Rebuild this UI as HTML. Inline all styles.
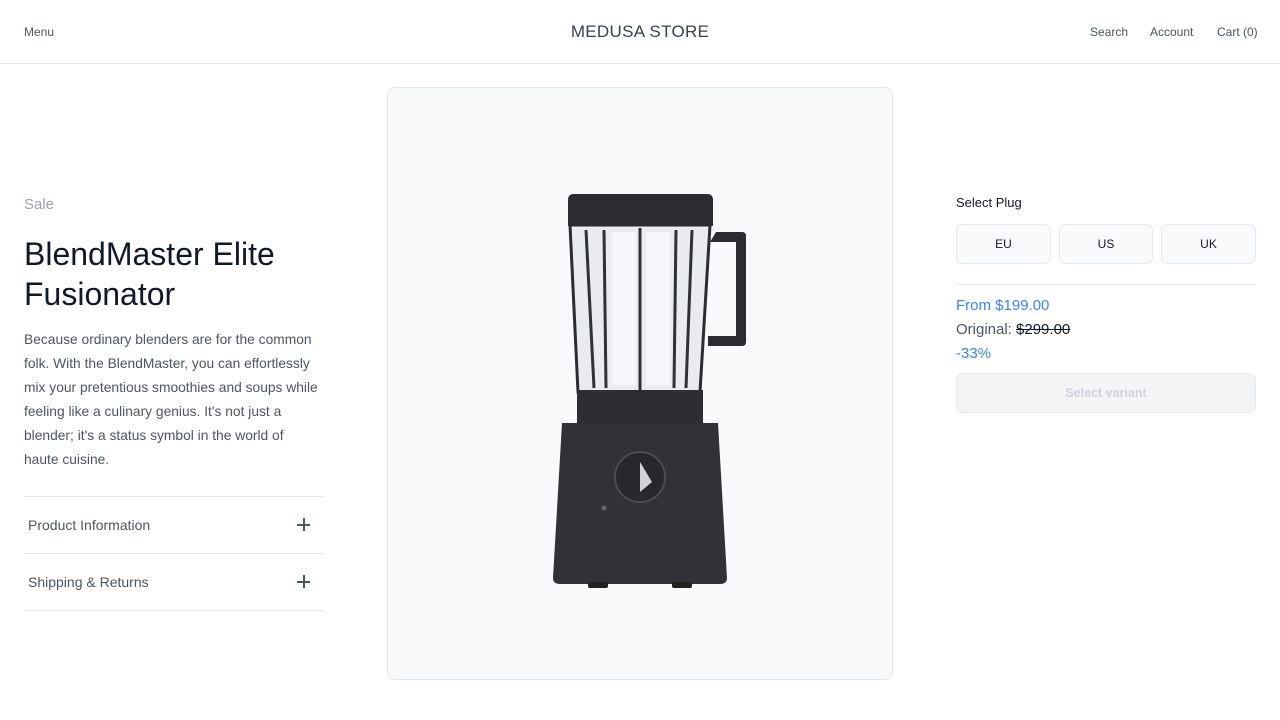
<!DOCTYPE html>
<html><head><meta charset="utf-8"><style>
*{margin:0;padding:0;box-sizing:border-box}
body{width:1280px;height:720px;background:#fff;font-family:"Liberation Sans",sans-serif;color:#374151;position:relative;overflow:hidden}
.hdr{position:absolute;left:0;top:0;width:1280px;height:64px;border-bottom:1px solid #e5e7eb}
.hdr span{position:absolute;top:25px;font-size:12px;color:#4b5563}
.logo{position:absolute;left:0;width:1280px;text-align:center;top:22px;font-size:17px;color:#374151;letter-spacing:.3px}
.abs{position:absolute}
.acc{position:absolute;left:24px;width:300px;height:57px;border-top:1px solid #e5e7eb;font-size:14px;color:#4b5563}
.acc span{position:absolute;left:4px;top:20px}
.acc i{position:absolute;right:14px;top:21px;width:13px;height:13px}
.acc i:before{content:"";position:absolute;left:0;top:6px;width:13px;height:1.5px;background:#4b5563}
.acc i:after{content:"";position:absolute;left:6px;top:0;width:1.5px;height:13px;background:#4b5563}
.btn{position:absolute;top:224px;height:40px;border:1px solid #e5e7eb;border-radius:7px;background:#f9fafb;font-size:12px;text-align:center;line-height:38px;color:#111827}
</style></head><body>
<div class="hdr">
<span style="left:24px">Menu</span>
<div class="logo">MEDUSA STORE</div>
<span style="left:1090px">Search</span>
<span style="left:1150px">Account</span>
<span style="left:1217px">Cart (0)</span>
</div>
<div class="abs" style="left:24px;top:196px;font-size:15px;color:#9ca3af">Sale</div>
<div class="abs" style="left:24px;top:234px;font-size:32px;line-height:40px;color:#111827;width:330px">BlendMaster Elite Fusionator</div>
<div class="abs" style="left:24px;top:328px;width:296px;font-size:13.8px;line-height:24px;color:#4b5563">Because ordinary blenders are for the common folk. With the BlendMaster, you can effortlessly mix your pretentious smoothies and soups while feeling like a culinary genius. It's not just a blender; it's a status symbol in the world of haute cuisine.</div>
<div class="acc" style="top:496px"><span>Product Information</span><i></i></div>
<div class="acc" style="top:553px"><span>Shipping &amp; Returns</span><i></i></div>
<div class="abs" style="left:24px;top:610px;width:300px;border-top:1px solid #e5e7eb"></div>

<div class="abs" style="left:387px;top:87px;width:506px;height:593px;background:#f8f9fb;border:1px solid #e5e7eb;border-radius:8px"></div>
<svg class="abs" style="left:0;top:0" width="1280" height="720">
<path d="M716 232 H742 Q746 232 746 236 V342 Q746 346 742 346 H708 V336 H736 V242 H710 Z" fill="#2a2c30"/>
<path d="M570 225 L710 225 L700 392 L578 392 Z" fill="#e9ecef" stroke="#2a2c30" stroke-width="3"/>
<path d="M586 230 L594 388 M604 230 L606 388 M640 228 L640 390 M676 230 L674 388 M692 230 L686 388" stroke="#2f3135" stroke-width="3"/>
<path d="M612 232 H636 V385 H612Z M646 232 H670 V385 H646Z" fill="#f4f6f8"/>
<path d="M568 200 Q568 194 574 194 H707 Q713 194 713 200 V226 H568Z" fill="#2a2c30"/>
<rect x="577" y="390" width="126" height="33" fill="#2c2e32"/>
<path d="M562 423 H718 L727 578 Q727 584 720 584 H560 Q553 584 553 578 Z" fill="#303236"/>
<rect x="588" y="582" width="20" height="6" rx="2" fill="#222"/>
<rect x="672" y="582" width="20" height="6" rx="2" fill="#222"/>
<circle cx="640" cy="477" r="25" fill="#26282b" stroke="#4a4c50" stroke-width="2"/>
<path d="M640 462 V492 L652 482Z" fill="#d0d2d4"/>
<circle cx="604" cy="508" r="2.5" fill="#666"/>
</svg>

<div class="abs" style="left:956px;top:195px;font-size:13px;color:#111827">Select Plug</div>
<div class="btn" style="left:956px;width:95px">EU</div>
<div class="btn" style="left:1059px;width:94px">US</div>
<div class="btn" style="left:1161px;width:95px">UK</div>
<div class="abs" style="left:956px;top:284px;width:300px;border-top:1px solid #e5e7eb"></div>
<div class="abs" style="left:956px;top:297px;font-size:15px;color:#3b82f6">From $199.00</div>
<div class="abs" style="left:956px;top:321px;font-size:15px;color:#4b5563">Original: <span style="text-decoration:line-through;color:#111827">$299.00</span></div>
<div class="abs" style="left:956px;top:345px;font-size:15px;color:#3b82f6">-33%</div>
<div class="abs" style="left:956px;top:373px;width:300px;height:40px;background:#f3f4f6;border:1px solid #e5e7eb;border-radius:7px;text-align:center;line-height:38px;font-size:12.5px;font-weight:bold;color:#d1d5db">Select variant</div>
</body></html>
